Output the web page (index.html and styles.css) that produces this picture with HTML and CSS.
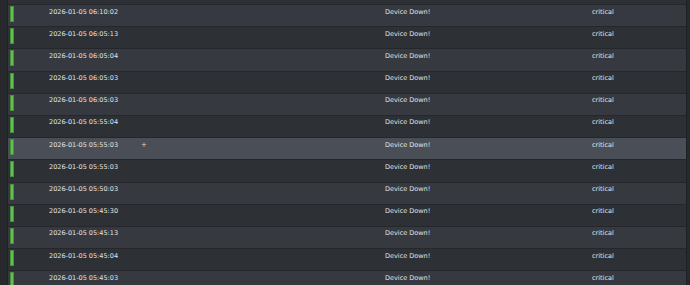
FILE: index.html
```html
<!DOCTYPE html>
<html>
<head>
<meta charset="utf-8">
<link rel="stylesheet" href="styles.css">
</head>
<body>
<div class="frame">
  <div class="gutter"></div>
  <div class="table">
    <div class="stub"></div>
    <div class="row light"><span class="bar"></span><span class="c-date">2026-01-05 06:10:02</span><span class="c-msg">Device Down!</span><span class="c-sev">critical</span></div>
    <div class="row dark"><span class="bar"></span><span class="c-date">2026-01-05 06:05:13</span><span class="c-msg">Device Down!</span><span class="c-sev">critical</span></div>
    <div class="row light"><span class="bar"></span><span class="c-date">2026-01-05 06:05:04</span><span class="c-msg">Device Down!</span><span class="c-sev">critical</span></div>
    <div class="row dark"><span class="bar"></span><span class="c-date">2026-01-05 06:05:03</span><span class="c-msg">Device Down!</span><span class="c-sev">critical</span></div>
    <div class="row light"><span class="bar"></span><span class="c-date">2026-01-05 06:05:03</span><span class="c-msg">Device Down!</span><span class="c-sev">critical</span></div>
    <div class="row dark"><span class="bar"></span><span class="c-date">2026-01-05 05:55:04</span><span class="c-msg">Device Down!</span><span class="c-sev">critical</span></div>
    <div class="row hover"><span class="bar"></span><span class="c-date">2026-01-05 05:55:03</span><span class="c-msg">Device Down!</span><span class="c-sev">critical</span><span class="cursor">+</span></div>
    <div class="row dark"><span class="bar"></span><span class="c-date">2026-01-05 05:55:03</span><span class="c-msg">Device Down!</span><span class="c-sev">critical</span></div>
    <div class="row light"><span class="bar"></span><span class="c-date">2026-01-05 05:50:03</span><span class="c-msg">Device Down!</span><span class="c-sev">critical</span></div>
    <div class="row dark"><span class="bar"></span><span class="c-date">2026-01-05 05:45:30</span><span class="c-msg">Device Down!</span><span class="c-sev">critical</span></div>
    <div class="row light"><span class="bar"></span><span class="c-date">2026-01-05 05:45:13</span><span class="c-msg">Device Down!</span><span class="c-sev">critical</span></div>
    <div class="row dark"><span class="bar"></span><span class="c-date">2026-01-05 05:45:04</span><span class="c-msg">Device Down!</span><span class="c-sev">critical</span></div>
    <div class="row light"><span class="bar"></span><span class="c-date">2026-01-05 05:45:03</span><span class="c-msg">Device Down!</span><span class="c-sev">critical</span></div>
  </div>
  <div class="gutter-r"></div>
</div>
</body>
</html>
```
FILE: styles.css
```css
html, body {
  margin: 0;
  padding: 0;
  background: #26282c;
  overflow: hidden;
}
.frame {
  display: flex;
  width: 690px;
  height: 285px;
  overflow: hidden;
  font-family: "DejaVu Sans", sans-serif;
  font-size: 6.5px;
  color: #e2e3e4;
}
.gutter {
  width: 7px;
  flex: none;
  background: #27292d;
  border-right: 1px solid #1f2124;
}
.gutter-r {
  width: 3px;
  flex: none;
  background: #27292d;
  border-left: 1px solid #1f2124;
}
.table {
  flex: 1;
  display: flex;
  flex-direction: column;
}
.stub {
  height: 4px;
  flex: none;
  background: #2d3035;
}
.row {
  position: relative;
  flex: none;
  box-sizing: border-box;
  height: 22.2px;
  border-top: 1px solid #25272b;
  display: flex;
  align-items: flex-start;
  line-height: 9px;
  padding-top: 2.5px;
}
.light { background: #363940; }
.dark { background: #2d3035; }
.hover { background: #4a4f57; }
.bar {
  flex: none;
  box-sizing: border-box;
  width: 4px;
  height: 16px;
  margin-top: -1.5px;
  margin-left: 2px;
  background: #5fc24b;
  border: 1px solid #48903d;
}
.c-date {
  margin-left: 35px;
  width: 336px;
  flex: none;
}
.c-msg {
  width: 207px;
  flex: none;
}
.c-sev {
  flex: none;
}
.cursor {
  position: absolute;
  left: 133px;
  top: 3px;
  font-size: 7px;
  color: #d8d8d8;
}
```
